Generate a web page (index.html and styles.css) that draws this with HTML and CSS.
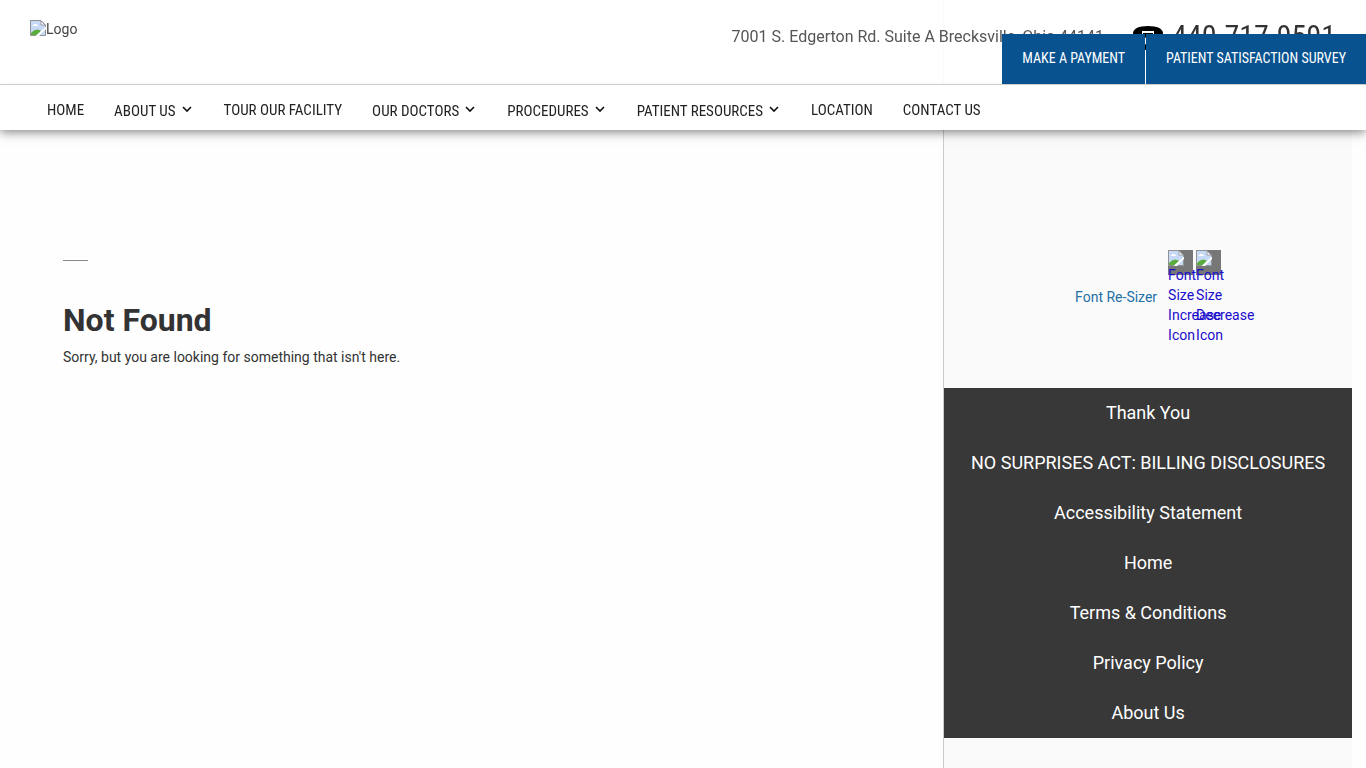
FILE: index.html
```html
<!DOCTYPE html>
<html lang="en">
<head>
<meta charset="utf-8">
<title>Not Found</title>
<link rel="stylesheet" href="styles.css">
</head>
<body>
<svg class="defs" aria-hidden="true">
  <symbol id="broken" viewBox="0 0 16 16">
    <path d="M.5.5H11L15.500 5V15.500H.5Z" fill="#c6d9f7" stroke="#919191"/>
    <path d="M1 1H10.500V5.500H15V6.500L1 15Z" fill="#c6d9f7"/>
    <path d="M11 1V5H15Z" fill="#fff" stroke="#919191" stroke-width=".8"/>
    <path d="M2.500 6Q2.500 4.500 4 4.500Q5 3 6.300 4.200Q8 4.300 8 6Z" fill="#fff"/>
    <path d="M1 15V13Q4 9.500 7 9.500Q9.500 9.500 11 11L7 15Z" fill="#5aad3d"/>
    <path d="M16 6.500V9L9 16H5.500Z" fill="#fff"/>
    <path d="M16 9V16H9L12 13Z" fill="#c6d9f7"/>
    <path d="M15.500 10V15.500H10" fill="none" stroke="#919191"/>
  </symbol>
  <symbol id="chevron" viewBox="0 0 10 7">
    <path d="M1 1L5 5L9 1" fill="none" stroke="#111" stroke-width="1.600"/>
  </symbol>
</svg>
<header class="site-header">
  <div class="top">
    <a class="logo" href="#"><svg class="broken"><use href="#broken"/></svg>Logo</a>
    <div class="contact">
      <span class="address">7001 S. Edgerton Rd. Suite A Brecksville, Ohio 44141</span>
      <a class="phone" href="tel:4407179591">
        <svg class="phone-icon" viewBox="0 0 30 24" aria-hidden="true">
          <path d="M0 7Q1 0 15 0Q29 0 30 7V9H21V5H9V9H0Z"/>
          <path d="M10 7H20V10L27 19V24H3V19L10 10Z"/>
          <circle cx="15" cy="15" r="4" fill="#fff"/>
        </svg>440.717.9591</a>
    </div>
    <div class="actions">
      <a href="#">MAKE A PAYMENT</a>
      <a href="#">PATIENT SATISFACTION SURVEY</a>
    </div>
  </div>
  <nav class="nav">
    <a href="#">HOME</a>
    <a class="parent" href="#">ABOUT US<svg><use href="#chevron"/></svg></a>
    <a href="#">TOUR OUR FACILITY</a>
    <a class="parent" href="#">OUR DOCTORS<svg><use href="#chevron"/></svg></a>
    <a class="parent" href="#">PROCEDURES<svg><use href="#chevron"/></svg></a>
    <a class="parent" href="#">PATIENT RESOURCES<svg><use href="#chevron"/></svg></a>
    <a href="#">LOCATION</a>
    <a href="#">CONTACT US</a>
  </nav>
</header>
<div class="page">
  <main class="content">
    <hr class="rule">
    <h1>Not Found</h1>
    <p>Sorry, but you are looking for something that isn't here.</p>
  </main>
  <aside class="sidebar">
    <div class="resizer">
      <span class="resizer-label">Font Re-Sizer</span>
      <div class="resizer-icons">
        <a href="#"><svg class="broken"><use href="#broken"/></svg>Font Size Increase Icon</a>
        <a href="#"><svg class="broken"><use href="#broken"/></svg>Font Size Decrease Icon</a>
      </div>
    </div>
    <nav class="side-menu">
      <a href="#">Thank You</a>
      <a href="#">NO SURPRISES ACT: BILLING DISCLOSURES</a>
      <a href="#">Accessibility Statement</a>
      <a href="#">Home</a>
      <a href="#">Terms &amp; Conditions</a>
      <a href="#">Privacy Policy</a>
      <a href="#">About Us</a>
    </nav>
  </aside>
</div>
</body>
</html>
```
FILE: styles.css
```css
* { box-sizing: border-box; }
body {
  margin: 0;
  font: 14px/20px Roboto, "Liberation Sans", sans-serif;
  color: #333;
  background: #fefefe;
}
a { color: inherit; text-decoration: none; }
.defs { position: absolute; width: 0; height: 0; }
.broken { display: block; width: 16px; height: 16px; flex: none; }

.site-header {
  position: fixed;
  inset: 0 0 auto;
  z-index: 2;
}
.top {
  position: relative;
  display: flex;
  justify-content: space-between;
  align-items: flex-start;
  height: 85px;
  padding: 20px 30px;
  background: rgba(255, 255, 255, .9);
  border-bottom: 1px solid #ccc;
}
.logo { display: flex; line-height: 18px; color: #444; }
.contact { display: flex; align-items: center; gap: 29px; }
.address { padding-top: 1px; font-size: 16px; color: #555; }
.phone {
  display: flex;
  gap: 9px;
  font: 30px/32px "Roboto Condensed", Roboto, sans-serif;
}
.phone-icon { width: 30px; height: 24px; margin-top: 6px; }
.actions {
  position: absolute;
  right: 0;
  bottom: 0;
  display: flex;
  gap: 1px;
  font: 14px/48px "Roboto Condensed", "Liberation Sans Narrow", sans-serif;
}
.actions a { padding: 0 20px 2px; color: #fff; background: #07528f; }
.nav {
  display: flex;
  gap: 30px;
  padding: 2px 47px 0;
  height: 45px;
  font: 15px/46px "Roboto Condensed", "Liberation Sans Narrow", sans-serif;
  color: #222;
  background: #fff;
  box-shadow: 0 2px 10px rgba(0, 0, 0, .5);
}
.parent { display: flex; align-items: center; gap: 6px; padding: 5px 2px 0 0; }
.parent svg { width: 10px; height: 7px; margin-bottom: 4px; }

.page { display: flex; min-height: 100vh; padding-right: 14px; }
.content { flex: 1; padding: 260px 63px 0; }
.rule { width: 25px; height: 1px; margin: 0 0 39px; border: 0; background: #888; }
h1 { margin: 0 0 7px; font-size: 32px; line-height: 40px; color: #333; }
p { margin: 0; }
.sidebar {
  width: calc(30vw - 1px);
  padding-top: 250px;
  border-left: 1px solid #ccc;
  background: #fafafa;
}
.resizer {
  display: flex;
  justify-content: center;
  align-items: center;
  gap: 11px;
  margin-bottom: 43px;
}
.resizer-label { padding-bottom: 1px; color: #2470a8; }
.resizer-icons { display: flex; gap: 3px; }
.resizer-icons a {
  width: 25px;
  color: #1a0dcc;
  background: linear-gradient(#777, #777) 0 0 / 25px 25px no-repeat;
}
.resizer-icons .broken { margin-bottom: -1px; }
.side-menu { display: flex; flex-direction: column; background: #383838; }
.side-menu a {
  font-size: 18px;
  line-height: 50px;
  text-align: center;
  color: #fff;
}
```
